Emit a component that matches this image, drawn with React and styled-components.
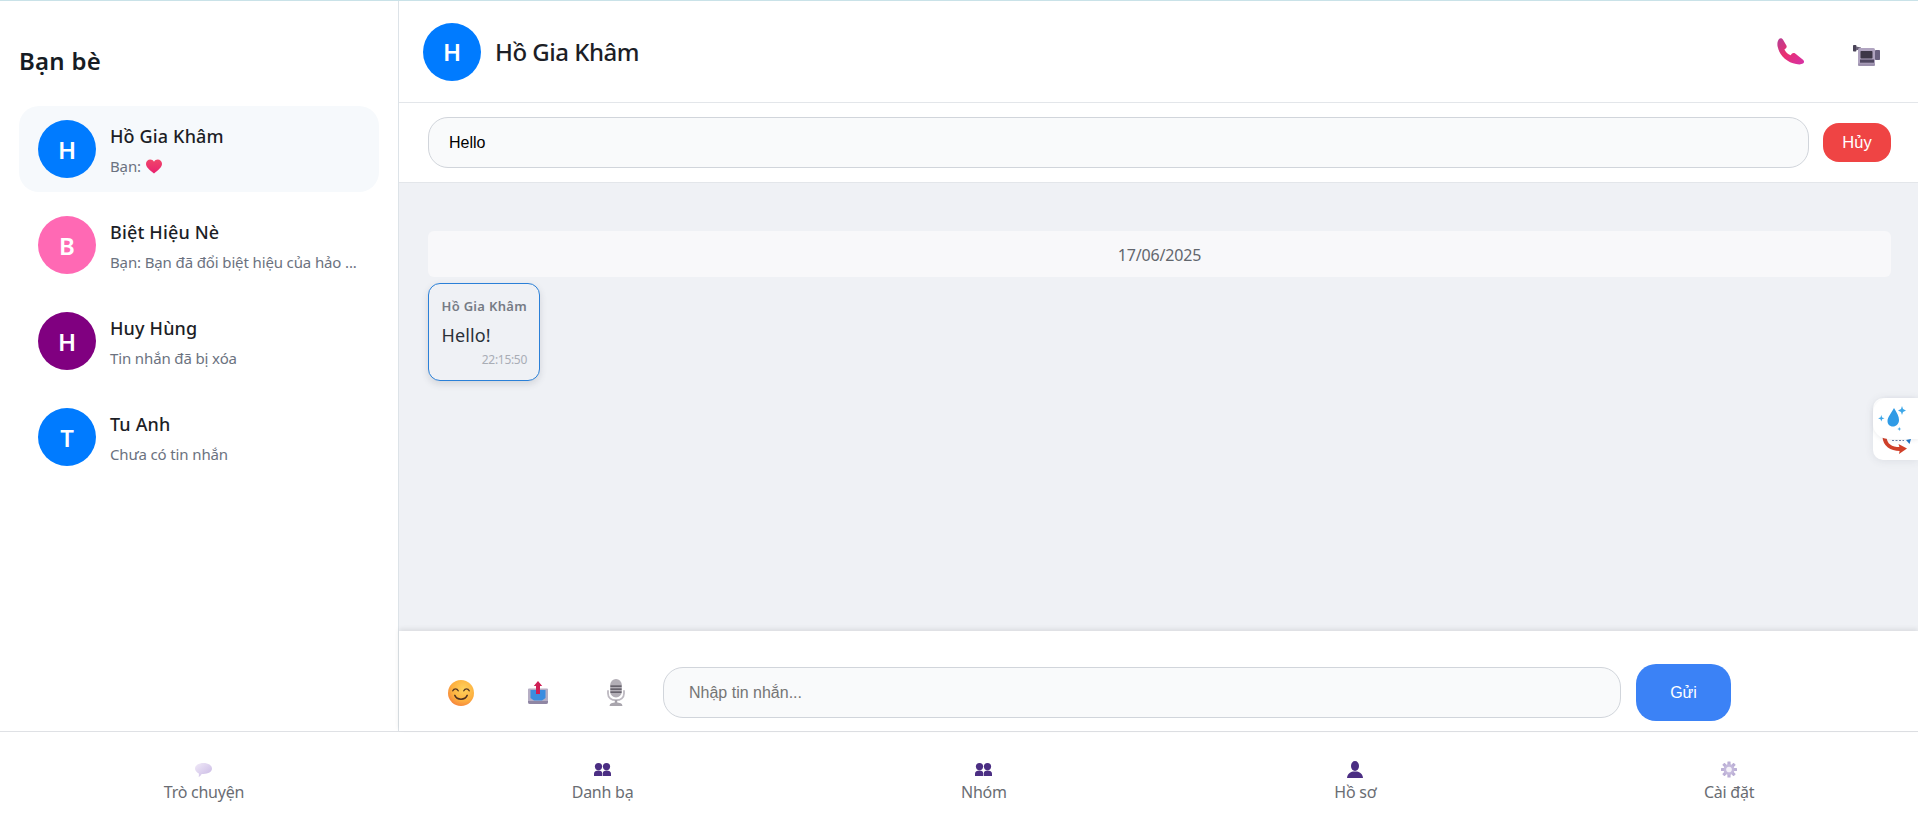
import React from "react";
import styled, { createGlobalStyle } from "styled-components";

const Global = createGlobalStyle`
  * { box-sizing: border-box; }
  html, body { margin: 0; padding: 0; height: 100%; background: #fff; overflow: hidden; }
  body { font-family: "Noto Sans", "Open Sans", sans-serif; color: #1c1e21; }
`;

const Page = styled.div`
  position: relative;
  width: 1918px;
  height: 825px;
  display: flex;
  flex-direction: column;
  border-top: 1px solid #c9e2e8;
  overflow: hidden;
`;
const Body = styled.div`
  flex: 1;
  min-height: 0;
  display: flex;
`;
const Sidebar = styled.aside`
  width: 399px;
  flex: none;
  padding: 0 19px;
  border-right: 1px solid #dde3e8;
`;
const SideTitle = styled.h2`
  margin: 0;
  height: 105px;
  padding: 43px 0 0 0;
  font-size: 24px;
  line-height: 33px;
  font-weight: 600;
  color: #161c24;
  letter-spacing: 0.25px;
`;
const FriendList = styled.div`
  display: flex;
  flex-direction: column;
  gap: 10px;
`;
const Friend = styled.div`
  width: 360px;
  height: 86px;
  display: flex;
  align-items: center;
  gap: 14px;
  padding: 0 19px;
  border-radius: 20px;
  background: ${(p) => (p.$active ? "#f6f9fc" : "transparent")};
`;
const Avatar = styled.div`
  width: 58px;
  height: 58px;
  flex: none;
  display: flex;
  align-items: center;
  justify-content: center;
  border-radius: 50%;
  color: #fff;
  font-size: 24px;
  font-weight: 600;
  background: ${(p) => p.$color};
`;
const FriendText = styled.div`
  min-width: 0;
  display: flex;
  flex-direction: column;
  gap: 8px;
  padding-top: 2px;
`;
const FriendName = styled.div`
  font-size: 18px;
  line-height: 24px;
  font-weight: 500;
  color: #1c1e26;
  letter-spacing: 0.15px;
`;
const FriendPreview = styled.div`
  display: flex;
  align-items: center;
  gap: 5px;
  font-size: 15px;
  line-height: 20px;
  color: #6b7280;
  letter-spacing: -0.13px;
  white-space: nowrap;
`;
const Main = styled.main`
  flex: 1;
  min-width: 0;
  display: flex;
  flex-direction: column;
`;
const ChatHeader = styled.header`
  height: 102px;
  flex: none;
  display: flex;
  align-items: center;
  padding: 0 38px 0 24px;
  border-bottom: 1px solid #e3e6ea;
`;
const HeaderName = styled.div`
  margin-left: 14px;
  font-size: 24px;
  line-height: 32px;
  font-weight: 500;
  color: #1c1e26;
  letter-spacing: -0.5px;
`;
const HeaderActions = styled.div`
  margin-left: auto;
  display: flex;
  align-items: center;
  gap: 48px;
`;
const CameraSlot = styled.div`
  display: flex;
  padding-top: 7px;
`;
const EditBar = styled.div`
  height: 80px;
  flex: none;
  display: flex;
  align-items: center;
  gap: 14px;
  padding: 0 27px 0 29px;
  border-bottom: 1px solid #e3e6ea;
`;
const EditInput = styled.input`
  flex: 1;
  min-width: 0;
  height: 51px;
  padding: 0 20px;
  border: 1px solid #d1d5db;
  border-radius: 20px;
  background: #f9fafb;
  color: #000;
  font: 16px "Liberation Sans", Arial, sans-serif;
  outline: none;
`;
const CancelButton = styled.button`
  width: 68px;
  height: 39px;
  flex: none;
  border: 0;
  border-radius: 16px;
  background: #ef4444;
  color: #fff;
  font: 16.5px "Liberation Sans", Arial, sans-serif;
`;
const Messages = styled.section`
  flex: 1;
  min-height: 0;
  padding: 48px 27px 0 29px;
  background: #eff1f5;
`;
const DateBar = styled.div`
  height: 46px;
  padding-top: 2px;
  display: flex;
  align-items: center;
  justify-content: center;
  border-radius: 6px;
  background: #f8f8fa;
  color: #62666d;
  font-size: 16px;
  letter-spacing: -0.15px;
`;
const Bubble = styled.div`
  width: 112px;
  height: 98px;
  margin-top: 6px;
  padding: 13px 12px 0 12.5px;
  border: 1.5px solid #2a80d8;
  border-radius: 12px;
  background: #eff1f5;
  box-shadow: 0 3px 7px rgba(60, 70, 90, 0.16);
`;
const BubbleName = styled.div`
  font-size: 13px;
  line-height: 18px;
  font-weight: 600;
  color: #767b85;
  letter-spacing: 0.3px;
  white-space: nowrap;
`;
const BubbleText = styled.div`
  margin-top: 8px;
  font-size: 18px;
  line-height: 24px;
  color: #2b3038;
  letter-spacing: 0.1px;
`;
const BubbleTime = styled.div`
  margin-top: 5px;
  text-align: right;
  font-size: 12px;
  line-height: 16px;
  color: #a9adb5;
  letter-spacing: -0.3px;
`;
const Composer = styled.div`
  position: relative;
  height: 100px;
  flex: none;
  display: flex;
  align-items: center;
  padding: 23px 0 0 49px;
  box-shadow: 0 -2px 5px rgba(0, 0, 0, 0.09);
`;
const ComposerIcon = styled.div`
  width: ${(p) => p.$w}px;
  height: 32px;
  flex: none;
  display: flex;
  align-items: center;
`;
const MessageInput = styled.input`
  width: 958px;
  height: 51px;
  flex: none;
  padding: 0 25px;
  border: 1px solid #d1d5db;
  border-radius: 20px;
  background: #f9fafb;
  color: #333;
  font: 16px "Liberation Sans", Arial, sans-serif;
  outline: none;
  &::placeholder { color: #757575; opacity: 1; }
`;
const SendButton = styled.button`
  width: 95px;
  height: 57px;
  margin-left: 15px;
  flex: none;
  border: 0;
  border-radius: 20px;
  background: #3b82f6;
  color: #fff;
  font: 16px "Liberation Sans", Arial, sans-serif;
`;
const BottomNav = styled.nav`
  height: 94px;
  flex: none;
  display: flex;
  justify-content: space-around;
  align-items: flex-start;
  padding-top: 29px;
  border-top: 1px solid #dfe1e5;
  background: #fff;
`;
const NavItem = styled.div`
  display: flex;
  flex-direction: column;
  align-items: center;
  color: #6a6d73;
  font-size: 16px;
  line-height: 22px;
  letter-spacing: -0.25px;
`;
const NavIconBox = styled.div`
  height: 17px;
  display: flex;
  align-items: center;
  justify-content: center;
  margin-bottom: 3px;
`;
const FloatWidget = styled.div`
  position: absolute;
  right: 0;
  top: 397px;
  width: 45px;
  height: 62px;
  border-radius: 10px 0 0 10px;
  background: #fff;
  box-shadow: 0 1px 8px rgba(60, 70, 90, 0.1);
`;
const FloatTop = styled.div`
  position: absolute;
  left: 0;
  top: 0;
  width: 45px;
  height: 41px;
  border-radius: 15px 0 0 15px;
  background: #fff;
  box-shadow: 0 1px 4px rgba(60, 70, 90, 0.1);
  z-index: 1;
`;
const FloatIconLow = styled.svg`
  position: absolute;
  left: 9px;
  top: 36px;
`;
const FloatIconTop = styled.svg`
  position: absolute;
  left: 4px;
  top: 8px;
`;

const PhoneIcon = () => (
  <svg width="28" height="27" viewBox="0 0 28 27">
    <defs>
      <linearGradient id="ph" x1="0" y1="0" x2="1" y2="1">
        <stop offset="0" stopColor="#b53f96" />
        <stop offset="0.45" stopColor="#ea2f6f" />
        <stop offset="1" stopColor="#d531a8" />
      </linearGradient>
    </defs>
    <path
      d="M2 1 C3.5-.2 5.3.4 6.2 2 L9.4 7.6 C10 8.8 9.6 10 8.4 10.7 L7.4 11.4 C8.6 14 10.8 16 13.6 17.3 L14.8 15.8 C15.6 14.8 16.8 14.6 17.9 15.3 L26 21.8 C27.4 23 27.4 24.6 26 25.6 C24.2 26.6 21.8 26.6 19.2 26 C10.2 24.6 2.4 17.2.6 8.6 C.1 5.8.4 3 2 1Z"
      fill="url(#ph)"
    />
  </svg>
);

const CameraIcon = () => (
  <svg width="27" height="21" viewBox="0 0 27 21">
    <rect x="0" y="0" width="3.4" height="6.5" rx="0.8" fill="#4a4458" />
    <path d="M3 1.5 L8 2.6 L8 5 L3 5Z" fill="#6a6278" />
    <rect x="5" y="3" width="17" height="17" rx="1.6" fill="#b0a4c0" />
    <rect x="7.5" y="6" width="12" height="7.5" rx="0.8" fill="#3d3747" />
    <rect x="22" y="5" width="5" height="10" rx="0.8" fill="#6a6180" />
    <rect x="7" y="14.5" width="14" height="3.2" fill="#4f4760" />
    <rect x="5" y="18.5" width="17" height="2.5" rx="1" fill="#9b90ac" />
  </svg>
);

const SmileIcon = () => (
  <svg width="26" height="26" viewBox="0 0 26 26">
    <defs>
      <radialGradient id="sm" cx="0.6" cy="0.35" r="0.75">
        <stop offset="0" stopColor="#ffd25c" />
        <stop offset="0.6" stopColor="#fdb03f" />
        <stop offset="1" stopColor="#f47a3c" />
      </radialGradient>
    </defs>
    <circle cx="13" cy="13" r="13" fill="url(#sm)" />
    <path d="M4.8 10.8 C6 8.2 9 8.2 10.2 10.8" fill="none" stroke="#5c3a24" strokeWidth="1.4" strokeLinecap="round" />
    <path d="M15.8 10.8 C17 8.2 20 8.2 21.2 10.8" fill="none" stroke="#5c3a24" strokeWidth="1.4" strokeLinecap="round" />
    <path d="M6.8 15.4 C9 20.4 17 20.4 19.2 15.4" fill="none" stroke="#4e3020" strokeWidth="1.5" strokeLinecap="round" />
  </svg>
);

const UploadIcon = () => (
  <svg width="20" height="24" viewBox="0 0 20 24">
    <path d="M1 7.5 h18 a1 1 0 0 1 1 1 V21 a2 2 0 0 1-2 2 H2 a2 2 0 0 1-2-2 V8.5 a1 1 0 0 1 1-1Z" fill="#b6aec4" />
    <path d="M2.5 9 H17.5 V17 L14 19.5 H6 L2.5 17Z" fill="#3b8de0" />
    <path d="M0 20 h20 v1 a2 2 0 0 1-2 2 H2 a2 2 0 0 1-2-2Z" fill="#8f86a3" />
    <path d="M10 0 L14.2 5 H12 V13 H8 V5 H5.8Z" fill="#cf1f55" />
  </svg>
);

const MicIcon = () => (
  <svg width="18" height="27" viewBox="0 0 18 27">
    <rect x="3.2" y="0" width="11.6" height="18.5" rx="5.8" fill="#b2aeb6" />
    <path d="M3.4 7.2 H14.6 M3.4 10.2 H14.6 M3.4 13.2 H14.6" stroke="#4f4b55" strokeWidth="1.3" />
    <path d="M1 12 V14.5 C1 19 4.5 21.2 9 21.2 C13.5 21.2 17 19 17 14.5 V12" fill="none" stroke="#bdb9c1" strokeWidth="1.8" strokeLinecap="round" />
    <rect x="7.8" y="21" width="2.4" height="3" fill="#a5a1a9" />
    <path d="M2.6 27 C2.6 24.2 5 23.4 9 23.4 C13 23.4 15.4 24.2 15.4 27Z" fill="#a9a5ad" />
  </svg>
);

const ChatNavIcon = () => (
  <svg width="17" height="14" viewBox="0 0 17 14">
    <defs>
      <linearGradient id="bb" x1="0" y1="0" x2="1" y2="1">
        <stop offset="0" stopColor="#f1eaf8" />
        <stop offset="1" stopColor="#c8b8e4" />
      </linearGradient>
    </defs>
    <path d="M8.5 0 C13.2 0 17 2.3 17 5.6 C17 8.9 13.2 11 8.5 11 L6.6 11 C6 12.4 5 13.4 3.6 13.8 C4 12.8 4 11.6 3.8 10.4 C1.5 9.4 0 7.7 0 5.6 C0 2.3 3.8 0 8.5 0Z" fill="url(#bb)" />
  </svg>
);

const PeopleIcon = () => (
  <svg width="17" height="13" viewBox="0 0 17 13">
    <ellipse cx="4.5" cy="3.6" rx="3.6" ry="3.6" fill="#4b2e83" />
    <ellipse cx="12.5" cy="3.6" rx="3.6" ry="3.6" fill="#4b2e83" />
    <path d="M0 13 V10.6 C0 8.6 2 7.4 4.5 7.4 C7 7.4 8.2 8.6 8.2 10.6 V13Z" fill="#4b2e83" />
    <path d="M8.8 13 V10.6 C8.8 8.6 10 7.4 12.5 7.4 C15 7.4 17 8.6 17 10.6 V13Z" fill="#4b2e83" />
  </svg>
);

const PersonIcon = () => (
  <svg width="16" height="17" viewBox="0 0 16 17">
    <ellipse cx="8" cy="5" rx="4" ry="5" fill="#4b2e83" />
    <path d="M0 17 C0.5 13 3 11.4 6 10.6 H10 C13 11.4 15.5 13 16 17Z" fill="#4b2e83" />
  </svg>
);

const GearIcon = () => (
  <svg width="16" height="17" viewBox="0 0 16 16">
    <g fill="#bcb0d6">
      {[0, 45, 90, 135, 180, 225, 270, 315].map((a) => (
        <rect key={a} x="6.4" y="0" width="3.2" height="4" rx="0.5" transform={`rotate(${a} 8 8)`} />
      ))}
    </g>
    <circle cx="8" cy="8" r="5.4" fill="#c4b9dc" />
    <circle cx="8" cy="8" r="2.8" fill="#f4f1f8" />
  </svg>
);

const friends = [
  { name: "Hồ Gia Khâm", initial: "H", color: "#007bff", active: true, heart: true, preview: "Bạn:" },
  { name: "Biệt Hiệu Nè", initial: "B", color: "#ff69b4", preview: "Bạn: Bạn đã đổi biệt hiệu của hảo ..." },
  { name: "Huy Hùng", initial: "H", color: "#800080", preview: "Tin nhắn đã bị xóa" },
  { name: "Tu Anh", initial: "T", color: "#007bff", preview: "Chưa có tin nhắn" },
];

const navs = [
  { label: "Trò chuyện", icon: <ChatNavIcon /> },
  { label: "Danh bạ", icon: <PeopleIcon /> },
  { label: "Nhóm", icon: <PeopleIcon /> },
  { label: "Hồ sơ", icon: <PersonIcon /> },
  { label: "Cài đặt", icon: <GearIcon /> },
];

const Heart = () => (
  <svg width="16" height="15" viewBox="0 0 17 15">
    <defs>
      <linearGradient id="ht" x1="0" y1="0" x2="0" y2="1">
        <stop offset="0" stopColor="#f0466a" />
        <stop offset="1" stopColor="#e9216f" />
      </linearGradient>
    </defs>
    <path d="M8.5 15 C3 10.8 0 8 0 4.6 C0 1.8 2.2 0 4.5 0 C6.2 0 7.6.8 8.5 2.4 C9.4.8 10.8 0 12.5 0 C14.8 0 17 1.8 17 4.6 C17 8 14 10.8 8.5 15Z" fill="url(#ht)" />
  </svg>
);

export default function App() {
  return (
    <Page>
      <Global />
      <Body>
        <Sidebar>
          <SideTitle>Bạn bè</SideTitle>
          <FriendList>
            {friends.map((f) => (
              <Friend key={f.name} $active={f.active}>
                <Avatar $color={f.color}>{f.initial}</Avatar>
                <FriendText>
                  <FriendName>{f.name}</FriendName>
                  <FriendPreview>
                    {f.preview}
                    {f.heart && <Heart />}
                  </FriendPreview>
                </FriendText>
              </Friend>
            ))}
          </FriendList>
        </Sidebar>
        <Main>
          <ChatHeader>
            <Avatar $color="#007bff">H</Avatar>
            <HeaderName>Hồ Gia Khâm</HeaderName>
            <HeaderActions>
              <PhoneIcon />
              <CameraSlot><CameraIcon /></CameraSlot>
            </HeaderActions>
          </ChatHeader>
          <EditBar>
            <EditInput defaultValue="Hello" />
            <CancelButton>Hủy</CancelButton>
          </EditBar>
          <Messages>
            <DateBar>17/06/2025</DateBar>
            <Bubble>
              <BubbleName>Hồ Gia Khâm</BubbleName>
              <BubbleText>Hello!</BubbleText>
              <BubbleTime>22:15:50</BubbleTime>
            </Bubble>
          </Messages>
          <Composer>
            <ComposerIcon $w={80}><SmileIcon /></ComposerIcon>
            <ComposerIcon $w={79}><UploadIcon /></ComposerIcon>
            <ComposerIcon $w={56}><MicIcon /></ComposerIcon>
            <MessageInput placeholder="Nhập tin nhắn..." />
            <SendButton>Gửi</SendButton>
          </Composer>
        </Main>
      </Body>
      <BottomNav>
        {navs.map((n) => (
          <NavItem key={n.label}>
            <NavIconBox>{n.icon}</NavIconBox>
            {n.label}
          </NavItem>
        ))}
      </BottomNav>
      <FloatWidget>
        <FloatIconLow width="30" height="24" viewBox="0 0 30 24">
          <path d="M2.5 3 C3 11 9 15 18 15" fill="none" stroke="#d0402a" strokeWidth="4" />
          <path d="M16.5 10 L25 14.5 L17 20 L18 15Z" fill="#d0402a" />
          <path d="M10 6.5 H22" stroke="#6b7fa8" strokeWidth="1" strokeDasharray="2 1.5" fill="none" />
          <path d="M24 6 L29 5 L27.5 10Z" fill="#1f78c8" />
        </FloatIconLow>
        <FloatTop>
          <FloatIconTop width="32" height="28" viewBox="0 0 32 28">
            <path d="M17 2 C20 7 22 10 22 14 C22 18 19 20.5 16 20.5 C12.5 20.5 10.5 18 10.5 15 C10.5 11 14.5 7 17 2Z" fill="#2f9be6" />
            <path d="M25 0 L26 3 L29 4.5 L26 6 L25 9 L24 6 L21 4.5 L24 3Z" fill="#3da7e8" />
            <path d="M4.3 9 L5.1 11.4 L7.5 12.3 L5.1 13.2 L4.3 15.6 L3.5 13.2 L1.1 12.3 L3.5 11.4Z" fill="#3da7e8" />
            <path d="M22.3 21 L22.9 22.4 L24.3 23 L22.9 23.6 L22.3 25 L21.7 23.6 L20.3 23 L21.7 22.4Z" fill="#3da7e8" />
          </FloatIconTop>
        </FloatTop>
      </FloatWidget>
    </Page>
  );
}
